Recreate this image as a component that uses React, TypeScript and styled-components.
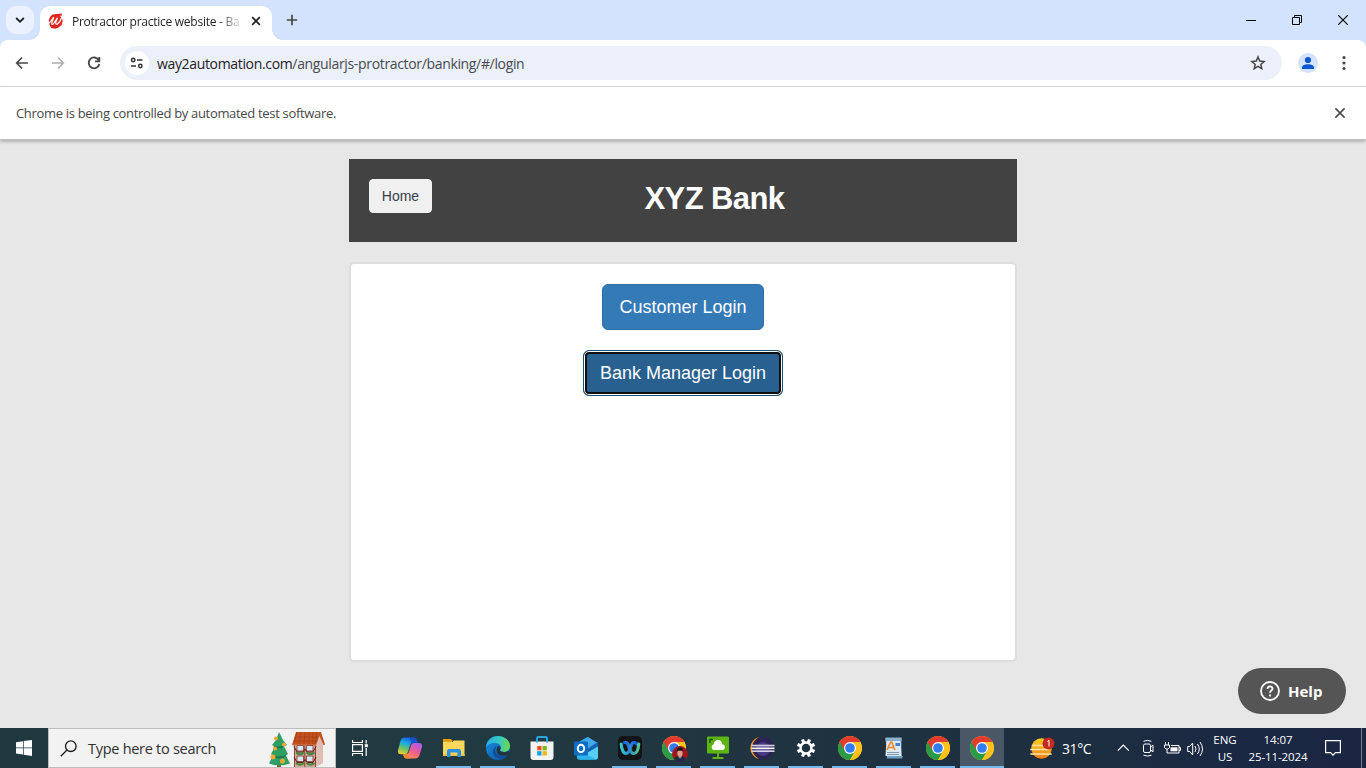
import React from 'react';
import styled, { createGlobalStyle } from 'styled-components';

const Global = createGlobalStyle`
  * { box-sizing: border-box; }
  html, body { margin: 0; padding: 0; overflow: hidden; }
  svg { display: block; flex: none; }
  button { margin: 0; cursor: pointer; }
`;

const ui = `"Segoe UI", "Open Sans", "Noto Sans", sans-serif`;
const arial = `Arial, "Liberation Sans", sans-serif`;

const Screen = styled.div`
  width: 1366px;
  height: 768px;
  display: flex;
  flex-direction: column;
  background: #e7e7e7;
  font-family: ${ui};
`;

const Label = styled.span<{ $size: number; $color?: string; $gap?: number }>`
  font-size: ${p => p.$size}px;
  color: ${p => p.$color ?? 'inherit'};
  letter-spacing: ${p => p.$gap ?? 0}px;
  white-space: nowrap;
`;

/* ---------- browser chrome ---------- */

const TabStrip = styled.div`
  height: 40px;
  flex: none;
  display: flex;
  background: #d3e3fd;
  padding-left: 6px;
`;

const TabSearch = styled.div`
  width: 28px;
  height: 28px;
  margin-top: 6px;
  border-radius: 10px;
  background: #ebf2fe;
  display: flex;
  align-items: center;
  justify-content: center;
`;

const Tab = styled.div`
  position: relative;
  width: 232px;
  height: 34px;
  margin: 6px 0 0 6px;
  padding: 0 0 4px 8px;
  border-radius: 10px 10px 0 0;
  background: #fff;
  display: flex;
  align-items: center;
  &::before, &::after {
    content: '';
    position: absolute;
    bottom: 0;
    width: 10px;
    height: 10px;
  }
  &::before {
    left: -10px;
    background: radial-gradient(circle at 0 0, transparent 9.5px, #fff 10px);
  }
  &::after {
    right: -10px;
    background: radial-gradient(circle at 100% 0, transparent 9.5px, #fff 10px);
  }
`;

const TabTitle = styled.div`
  width: 167px;
  margin: 0 12px 0 8px;
  white-space: nowrap;
  mask-image: linear-gradient(90deg, #000 146px, transparent 172px);
  line-height: 18px;
`;

const NewTab = styled.div`
  padding: 14px 0 0 14px;
`;

const WindowButtons = styled.div`
  margin-left: auto;
  display: flex;
`;

const WindowButton = styled.div`
  width: 46px;
  height: 40px;
  display: flex;
  align-items: center;
  justify-content: center;
`;

const ToolbarBack = styled.div`
  background: #d3e3fd;
  flex: none;
`;

const Toolbar = styled.div`
  height: 47px;
  padding: 0 12px 0 12px;
  background: #fff;
  border-bottom: 1px solid #dcdcdc;
  border-radius: 8px 8px 0 0;
  display: flex;
  align-items: center;
`;

const NavIcon = styled.div<{ $w: number }>`
  width: ${p => p.$w}px;
  height: 34px;
  display: flex;
  align-items: center;
`;

const AddressBar = styled.div`
  width: 1162px;
  height: 34px;
  border-radius: 17px;
  background: #ecf0fa;
  padding: 0 16px 0 5px;
  display: flex;
  align-items: center;
`;

const SiteInfo = styled.div`
  width: 24px;
  height: 24px;
  margin-right: 8px;
  border-radius: 50%;
  background: #fff;
  display: flex;
  align-items: center;
  justify-content: center;
`;

const Push = styled.div`
  margin-left: auto;
`;

const Avatar = styled.div`
  margin-left: 16px;
`;

const InfoBar = styled.div`
  position: relative;
  height: 52px;
  flex: none;
  padding: 0 20px 0 16px;
  background: #fff;
  box-shadow: 0 1px 0 #bfc2c2, 0 2px 4px rgba(0, 0, 0, 0.32);
  display: flex;
  align-items: center;
  justify-content: space-between;
`;

/* ---------- page ---------- */

const Page = styled.main`
  position: relative;
  flex: 1;
  padding-top: 20px;
  display: flex;
  flex-direction: column;
  align-items: center;
  font-family: ${arial};
`;

const BankHeader = styled.header`
  width: 668px;
  height: 83px;
  padding: 20px;
  background: #424242;
  display: flex;
`;

const HomeButton = styled.button`
  width: 63px;
  height: 34px;
  padding: 0;
  border: 1px solid #f0f0f0;
  border-radius: 4px;
  background: #f0f0f0;
  color: #34404a;
  font: 14px ${arial};
`;

const BankTitle = styled.h1`
  flex: 1;
  margin: 0;
  text-align: center;
  color: #fff;
  font: bold 31px/40px ${arial};
  letter-spacing: -0.6px;
`;

const Panel = styled.section`
  width: 668px;
  height: 400px;
  margin-top: 20px;
  padding: 20px;
  border: 2px solid #ddd;
  border-radius: 5px;
  background: #fff;
  display: flex;
  flex-direction: column;
  align-items: center;
  gap: 20px;
`;

const LoginButton = styled.button<{ $focused?: boolean }>`
  height: 46px;
  width: ${p => (p.$focused ? 200 : 162)}px;
  padding: 0;
  border: 1px solid ${p => (p.$focused ? '#204d74' : '#2e6da4')};
  border-radius: 6px;
  background: ${p => (p.$focused ? '#286090' : '#337ab7')};
  color: #fff;
  font: 18px ${arial};
  outline: none;
  box-shadow: ${p => (p.$focused ? 'inset 0 0 0 1px #fff, inset 0 0 0 3px #101010' : 'none')};
`;

const HelpButton = styled.button`
  position: absolute;
  right: 20px;
  bottom: 14px;
  width: 108px;
  height: 46px;
  border: 0;
  border-radius: 23px;
  background: #555;
  color: #fff;
  padding: 0 0 0 22px;
  display: flex;
  align-items: center;
  gap: 8px;
  font: bold 15px ${ui};
`;

/* ---------- taskbar ---------- */

const Taskbar = styled.footer`
  height: 40px;
  flex: none;
  display: flex;
  background: linear-gradient(90deg, #20383f 0%, #213941 38%, #1f3240 62%, #1d2f40 78%, #1b2843 90%, #1a2642 100%);
  color: #fff;
`;

const StartCell = styled.div`
  width: 48px;
  display: flex;
  align-items: center;
  justify-content: center;
`;

const SearchBox = styled.div`
  width: 288px;
  height: 40px;
  padding-left: 11px;
  border: 1px solid #bdbdbd;
  background: #f2f2f2;
  display: flex;
  align-items: center;
  gap: 11px;
`;

const Festive = styled.div`
  margin-left: auto;
  padding-right: 9px;
  align-self: flex-end;
`;

const TaskView = styled.div`
  width: 52px;
  height: 40px;
  padding-right: 5px;
  display: flex;
  align-items: center;
  justify-content: center;
`;

const Cell = styled.div<{ $open?: boolean; $active?: boolean }>`
  width: 44px;
  height: 40px;
  display: flex;
  align-items: center;
  justify-content: center;
  background: ${p => (p.$active ? '#4a5766' : 'transparent')};
  position: relative;
  &::after {
    content: '';
    display: ${p => (p.$open ? 'block' : 'none')};
    position: absolute;
    bottom: 0;
    left: ${p => (p.$active ? 0 : 4)}px;
    right: ${p => (p.$active ? 0 : 5)}px;
    height: 2px;
    background: #76b9ed;
  }
`;

const Tray = styled.div`
  margin-left: auto;
  display: flex;
  align-items: center;
`;

const Weather = styled.div`
  display: flex;
  align-items: center;
  gap: 7px;
  width: 87px;
`;

const TrayIcons = styled.div`
  display: flex;
  align-items: center;
  width: 90px;
`;

const Stack = styled.div<{ $w: number }>`
  width: ${p => p.$w}px;
  display: flex;
  flex-direction: column;
  align-items: center;
  line-height: 17px;
`;

const Notify = styled.div`
  width: 40px;
  display: flex;
  justify-content: center;
`;

const ShowDesktop = styled.div`
  width: 5px;
  height: 40px;
  margin-left: 8px;
  border-left: 1px solid #737c8d;
`;

/* ---------- icons ---------- */

const ChromeIcon = ({ children }: { children?: React.ReactNode }) => (
  <svg width="28" height="28" viewBox="-2 -2 28 28">
    <circle cx="12" cy="12" r="12" fill="#fbc117" />
    <path d="M12 12 L1.6 6 A12 12 0 0 0 12 24 L17.2 15z" fill="#2b9a48" />
    <path d="M12 12 L6.8 15 L1.6 6 A12 12 0 0 1 22.4 6 H12z" fill="#e33b2e" />
    <path d="M12 6 H22.4 A12 12 0 0 1 12 24 L17.2 15z" fill="#fcc21b" />
    <circle cx="12" cy="12" r="6" fill="#fff" />
    <circle cx="12" cy="12" r="4.8" fill="#2f7df0" />
    {children}
  </svg>
);

const ProfileChrome = () => (
  <ChromeIcon>
    <circle cx="18" cy="18" r="7.9" fill="#a3151d" />
    <path d="M12 23.200C12.500 20.800 15 20 18 20s5.500.8 6 3.200A7.900 7.900 0 0 1 12 23.200z" fill="#1d2c48" />
    <path d="M16.500 19h3v2.200l-1.500 1.300-1.500-1.300z" fill="#c58e78" />
    <ellipse cx="18" cy="17" rx="2.700" ry="3.500" fill="#d6a18a" />
    <path d="M15 16.300C14.500 12.500 15.800 11.300 18 11.300s3.500 1.200 3 5L20.400 14.700H15.600z" fill="#1a1416" />
  </ChromeIcon>
);

const CopilotIcon = () => (
  <svg width="26" height="26" viewBox="0 0 26 26">
    <defs>
      <linearGradient id="cpA" x1="0.6" y1="0" x2="0.2" y2="1">
        <stop offset="0" stopColor="#1b55d8" /><stop offset=".35" stopColor="#16a8e8" />
        <stop offset=".65" stopColor="#62c46b" /><stop offset="1" stopColor="#f6ca2b" />
      </linearGradient>
      <linearGradient id="cpB" x1="0.8" y1="0" x2="0.3" y2="1">
        <stop offset="0" stopColor="#a45df0" /><stop offset=".5" stopColor="#ee5b98" /><stop offset="1" stopColor="#ff8a4c" />
      </linearGradient>
    </defs>
    <path d="M8 2.500h9c2 0 2.500 1 3 3l.8 2.500h-4c-2 0-3 1-3.500 3l-1.600 5.500c-.6 2-1.500 2.800-3.500 2.800H4c-2.500 0-3.500-1.500-3-4L3.500 6C4.200 3.500 5.500 2.500 8 2.500z" fill="url(#cpA)" />
    <path d="M17 2.500c2 0 2.500 1 3 3l.8 2.500H17l-2.300.8-.9-3.300c-.5-2-1.300-3-3-3z" fill="#174fc8" />
    <path d="M18 23.500H9.500c-2 0-2.500-1-3-3l-.4-1.200h2.500c2 0 2.800-1 3.400-2.900l1.700-5.500c.5-2 1.500-2.900 3.500-2.900H22c2.500 0 3.500 1.500 3 4l-2.500 8c-.7 2.500-2 3.500-4.500 3.500z" fill="url(#cpB)" />
    <path d="M6.200 19.300h2.500l2.200-.6.800 2.400c.4 1.300 1 2.400 2.300 2.400H9.500c-2 0-2.500-1-3.300-4.200z" fill="#f48735" />
    <path d="M11.200 16.300l1.800-5.800c.5-1.700 1.200-2.500 2.400-2.500l-1.600 1.900-1.900 6.200c-.6 2-1.300 3.200-3.200 3.200 1.300-.5 2-1.400 2.500-3z" fill="#203641" />
  </svg>
);

const FolderIcon = () => (
  <svg width="24" height="24" viewBox="0 0 24 24">
    <path d="M1 3h8l2 2h-1v3H1z" fill="#e29d0d" />
    <path d="M1 6h9l2-1.500h10.500V20H1z" fill="#ffd65c" />
    <path d="M1 18h21.500v2H1z" fill="#f3c04a" />
    <path d="M5 21v-6.500L6.500 13h11l1.500 1.500V21h-3.500v-4.500h-7V21z" fill="#2b90df" />
  </svg>
);

const EdgeIcon = () => (
  <svg width="26" height="26" viewBox="0 0 26 26">
    <defs>
      <linearGradient id="edA" x1="0" y1=".3" x2="1" y2=".4">
        <stop offset="0" stopColor="#28a8e7" /><stop offset=".55" stopColor="#38c9c3" /><stop offset="1" stopColor="#6bd94f" />
      </linearGradient>
      <linearGradient id="edB" x1="0" y1="0" x2="1" y2="1"><stop offset="0" stopColor="#1690df" /><stop offset="1" stopColor="#0b4fa0" /></linearGradient>
    </defs>
    <circle cx="13" cy="13" r="12" fill="url(#edB)" />
    <path d="M1 13C1 5.500 6.500 1 13 1s12 4.500 12 10c0 4-3 6-6.200 6-3.300 0-4.200-1.300-3.500-2.400 2-3.100-.5-6.600-5.300-6.600C5 8 1.500 10.500 1 13z" fill="url(#edA)" />
    <path d="M12.200 11c-2 1.500-2.700 4-1.500 6.500 1.600 3.300 6 4.600 11.800 2.500-1 2-2.500 3.200-4.500 4.200C11 24 7.500 20 8 15.800c.3-2.300 2-4.200 4.200-4.800z" fill="#124b98" />
    <path d="M15.300 14.600c-.7 1.100.2 2.400 3.500 2.400 1.600 0 3-.5 4.200-1.300l1.500 2.500c-.6 1.500-1.200 1.700-2 1.900-5 1.500-9.500.3-10.600-2.600-.7-2.200-.2-4.800 1-6.200 2.500.1 3.200 1.800 2.400 3.300z" fill="#203641" />
  </svg>
);

const StoreIcon = () => (
  <svg width="24" height="26" viewBox="0 0 24 26">
    <path d="M7 8V3.500C7 2.500 7.600 2 8.500 2h7c.9 0 1.500.5 1.500 1.500V8" fill="none" stroke="#29a7df" strokeWidth="2" />
    <path d="M.5 6.500h23V22c0 2-1 3-3 3h-17c-2 0-3-1-3-3z" fill="#f3f3f3" />
    <path d="M7 5v2.500M17 5v2.500" stroke="#29a7df" strokeWidth="2" />
    <path d="M7.200 11h4.300v4.300H7.200z" fill="#f04e23" /><path d="M12.500 11h4.300v4.300h-4.300z" fill="#78b817" />
    <path d="M7.200 16.200h4.300v4.300H7.200z" fill="#04a2ed" /><path d="M12.500 16.200h4.300v4.300h-4.300z" fill="#fbb605" />
  </svg>
);

const OutlookIcon = () => (
  <svg width="26" height="24" viewBox="0 0 26 24">
    <path d="M4 7L14 1l11 6v14c0 1.500-.7 2.500-2 2.500H6c-1.300 0-2-1-2-2z" fill="#1377c9" />
    <path d="M6 6l9-5 9.500 6-10 7z" fill="#3fa9e9" />
    <path d="M14 13L25 6v8l-8 5z" fill="#1263b3" />
    <path d="M5 22L25 10.500V21c0 1.500-.7 2.500-2 2.500H7z" fill="#56cdf3" />
    <path d="M4 14l19 9.500H6c-1.300 0-2-1-2-2z" fill="#2ab4ed" />
    <rect x="1" y="5.500" width="14" height="14" rx="1" fill="#0f6cc4" />
    <ellipse cx="8" cy="12.500" rx="3.200" ry="3.700" fill="none" stroke="#fff" strokeWidth="1.900" />
  </svg>
);

const WebexIcon = () => (
  <svg width="24" height="24" viewBox="0 0 24 24">
    <defs>
      <linearGradient id="wxA" x1="0" x2="1"><stop offset="0" stopColor="#3bc6c4" /><stop offset="1" stopColor="#1a58ee" /></linearGradient>
      <linearGradient id="wxB" x1="0" x2="1"><stop offset="0" stopColor="#1b62ea" /><stop offset="1" stopColor="#58c98c" /></linearGradient>
    </defs>
    <rect width="24" height="24" rx="5" fill="#121416" />
    <path d="M3.200 8c.3 5.500 2.300 9.500 4.800 9.500 3 0 4.200-4.500 5.200-8 .6-2 1.500-3 3-3 1.200 0 2 .6 2.200 1.500" fill="none" stroke="url(#wxA)" strokeWidth="3.200" strokeLinecap="round" />
    <path d="M6.500 6.500c2.500-.5 3.500 1 4.300 4 1 4 2.200 7 5 7 2.700 0 4.500-4.300 4.900-9.500" fill="none" stroke="url(#wxB)" strokeWidth="3.200" strokeLinecap="round" />
  </svg>
);

const MonitorIcon = () => (
  <svg width="24" height="24" viewBox="0 0 24 24">
    <path d="M1.500 1h21v16h-21z" fill="#5eb512" stroke="#5eb512" strokeWidth="1" strokeLinejoin="round" />
    <path d="M11 17h2v4h4.500v2h-11v-2H11z" fill="#5eb512" />
    <path d="M4 7V3.500h3" fill="none" stroke="#1c500b" strokeWidth="1.400" />
    <path d="M7.500 14a3 3 0 0 1 0-5.500c.5-3 2.500-4.500 4.500-4.500s4 1.500 4.300 4.200A3 3 0 0 1 17 14z" fill="#fff" />
  </svg>
);

const EclipseIcon = () => (
  <svg width="26" height="24" viewBox="0 0 26 24">
    <path d="M10 1A11.300 11.300 0 0 0 10 23 13.500 13.500 0 0 1 10 1z" fill="#f7941e" />
    <circle cx="14" cy="12" r="11" fill="#2c2255" />
    <circle cx="14" cy="13" r="7" fill="#473a83" />
    <path d="M2.500 8.700h23v1.700h-23z" fill="#d5cfe3" /><path d="M2.500 11.500h23v1.700h-23z" fill="#fff" /><path d="M2.500 14.300h23V16h-23z" fill="#d5cfe3" />
  </svg>
);

const GearIcon = () => (
  <svg width="20" height="20" viewBox="0 0 20 20">
    <g stroke="#fff" strokeWidth="3.200">
      {[22.5, 67.5, 112.5, 157.5].map(a => (
        <path key={a} d="M10 .8v3.500M10 15.700v3.500" transform={`rotate(${a} 10 10)`} />
      ))}
    </g>
    <circle cx="10" cy="10" r="5.500" fill="none" stroke="#fff" strokeWidth="2.500" />
  </svg>
);

const WordPadIcon = () => (
  <svg width="20" height="24" viewBox="0 0 20 24">
    <path d="M1.500 2h16v18h1.500l-1 2.500H3z" fill="#6d9fc4" />
    <path d="M2.500 5h14l1 15H1.500z" fill="#dce9f5" />
    <path d="M1.500 1.500h16V5h-16z" fill="#8ab2cf" />
    <path d="M3 14L6.700 6h1l3.200 8M4.300 11.500h5.200" fill="none" stroke="#f08a2d" strokeWidth="1.700" />
    <path d="M11.500 7h4.500v3h-4.500z" fill="#4282ce" />
    <path d="M3 16.500h12M3 18.500h12" stroke="#8398ad" />
  </svg>
);

const FestiveArt = () => (
  <svg width="58" height="36" viewBox="0 0 58 36">
    <path d="M26 13h22v23H26z" fill="#d9a596" />
    <path d="M48 13l4-9 3 10v18l-7 4z" fill="#e0bcb2" />
    <path d="M26.500 13v23M36.800 13v23M47.500 13v23" stroke="#8c4436" strokeWidth="1" />
    <path d="M24 14L28 1h25l4 12.500-1.500.8L51.500 5 48 14z" fill="#c4521f" />
    <path d="M29 1l-3 12M33 1l-2 12M37 1l-1 12M41 1v12M45 1l-.5 12M49 1l-2 12M26.500 6h24M25.500 10h24" stroke="#9d3d17" strokeWidth=".6" />
    <path d="M24 14h24" stroke="#e08350" strokeWidth=".8" />
    {[14.5, 25].map(y => (
      <g key={y}>
        <path d={`M29 ${y}h6.500v5.500h-6.500zM38.500 ${y}h6.500v5.500h-6.500z`} fill="#d8e6f4" stroke="#7c3a2c" strokeWidth=".8" />
        <path d={`M26 ${y + 1}l3 5.500h6l2-3 2 3h6l3-5.500`} fill="none" stroke="#612018" strokeWidth="1" />
        <path d={`M28 ${y + 7}q4 3.500 8 0M38.500 ${y + 7}q4 3.500 8 0`} fill="none" stroke="#398c3c" strokeWidth="1.800" />
      </g>
    ))}
    <path d="M9 31h4v5H9z" fill="#8a5b34" />
    <path d="M11 1l4 8 4 5-3 1.500 4 7.500-2 1.500 4 8q-11 4-21 0l4-8-2-1.500 4-7.500-3-1.500 4-5z" fill="#2e9f63" />
    <path d="M5 14.500q6 2 11 0l-2 2.500q-4 1-8-1zM4 24q7 3 14 0l-3 3q-6 1-10-1z" fill="#1a7149" />
    <g fill="#eda832"><circle cx="8" cy="7.500" r="2" /><circle cx="16" cy="13.500" r="2" /><circle cx="7" cy="17.500" r="2" /><circle cx="14.500" cy="30" r="2.500" /><circle cx="5" cy="26" r="2.500" /></g>
  </svg>
);

const WeatherIcon = () => (
  <svg width="25" height="23" viewBox="0 0 25 23">
    <defs><linearGradient id="sun" x1="0" y1="0" x2="0" y2="1"><stop offset="0" stopColor="#ffd21f" /><stop offset="1" stopColor="#f57c18" /></linearGradient></defs>
    <circle cx="11.500" cy="11.500" r="10.300" fill="url(#sun)" />
    <path d="M3 8.500h13M1 12.500h9M12 12.500h6M1 17h20" stroke="#ffe9b0" strokeWidth="1.700" strokeLinecap="round" />
    <circle cx="18.500" cy="6.500" r="6" fill="#c52a20" />
    <path d="M17.500 4.500l1.500-1.200v6.200" fill="none" stroke="#fff" strokeWidth="1" />
  </svg>
);

const TrayGlyphs = () => (
  <svg width="88" height="20" viewBox="0 0 88 20" fill="none" stroke="#fff" strokeWidth="1.200">
    <path d="M.8 12.700L6.300 7.200l5.500 5.500" />
    <g strokeWidth="1">
      <rect x="26.500" y="6" width="7" height="8.500" rx="1.500" />
      <path d="M33.500 9l2.500-1.800v6.600l-2.500-1.800M26.500 3.300q4-1.800 8 0M26.500 17.200q4 1.800 8 0" />
      <path d="M48.500 4v3M51.500 4v3M47.500 7h5v2.500l-1.500 1.500h-2L47.500 9.500zM50 11v4h12V7.500h-8M62 9.500h1.500v3H62" />
    </g>
    <path d="M53.500 9.300h7v4h-7z" fill="#fff" stroke="none" />
    <path strokeWidth="1" d="M70.700 8.500h2l3-3.500v12l-3-3.500h-2zM78 8q2 3 0 6M80.500 6q3.500 5 0 10M83 4q5 7 0 14" />
  </svg>
);

const apps: { icon: React.ReactNode; open?: boolean; active?: boolean }[] = [
  { icon: <CopilotIcon /> },
  { icon: <FolderIcon />, open: true },
  { icon: <EdgeIcon />, open: true },
  { icon: <StoreIcon /> },
  { icon: <OutlookIcon /> },
  { icon: <WebexIcon />, open: true },
  { icon: <ProfileChrome />, open: true },
  { icon: <MonitorIcon />, open: true },
  { icon: <EclipseIcon />, open: true },
  { icon: <GearIcon />, open: true },
  { icon: <ChromeIcon />, open: true },
  { icon: <WordPadIcon />, open: true },
  { icon: <ChromeIcon />, open: true },
  { icon: <ChromeIcon />, open: true, active: true },
];

export default function App() {
  return (
    <Screen>
      <Global />
      <TabStrip>
        <TabSearch>
          <svg width="10" height="8" viewBox="0 0 10 8" fill="none" stroke="#1f1f1f" strokeWidth="1.800"><path d="M1.200 2L5 5.800 8.800 2" /></svg>
        </TabSearch>
        <Tab>
          <svg width="16" height="16" viewBox="0 0 16 16">
            <path d="M4.500 1.500L8.500 1l5.500-.5-.5 3 1.200 4.500-1 4-3.200 2.500-3 1.200-4.500-.7L1.300 11 .8 7 2 4z" fill="#e0251f" />
            <path d="M1 10.500L5.800 4.200 3.800 9.800Q3.500 12 5.200 11L9.500 4.700 7.800 9.300Q7.300 11.700 9.300 11.200 12.500 8.500 13.700 4.500 13.900 2.800 12.300 3.200" fill="none" stroke="#fff" strokeWidth="1.150" />
          </svg>
          <TabTitle><Label $size={12} $color="#1f1f1f" $gap={-0.26}>Protractor practice website - Ba</Label></TabTitle>
          <svg width="10" height="10" viewBox="0 0 10 10" stroke="#1f1f1f" strokeWidth="1.700"><path d="M1.200 1.200l7.600 7.600M8.800 1.200L1.200 8.800" /></svg>
        </Tab>
        <NewTab>
          <svg width="12" height="12" viewBox="0 0 12 12" stroke="#474747" strokeWidth="1.700"><path d="M6 .8v10.400M.8 6h10.400" /></svg>
        </NewTab>
        <WindowButtons>
          <WindowButton><svg width="10" height="10"><path d="M0 5.500h10" stroke="#000" /></svg></WindowButton>
          <WindowButton><svg width="10" height="10" fill="none" stroke="#000"><path d="M.5 2.500h7v7h-7zM2.500 2.500v-2h7v7h-2" /></svg></WindowButton>
          <WindowButton><svg width="10" height="10" stroke="#000" strokeWidth="1.100"><path d="M.2.2l9.600 9.600M9.800.2L.2 9.800" /></svg></WindowButton>
        </WindowButtons>
      </TabStrip>

      <ToolbarBack>
        <Toolbar>
          <NavIcon $w={36}>
            <svg width="20" height="20" viewBox="0 0 20 20" fill="none" stroke="#474747" strokeWidth="1.700"><path d="M16 10H5M10 4.500L4.700 10l5.300 5.500" /></svg>
          </NavIcon>
          <NavIcon $w={36}>
            <svg width="20" height="20" viewBox="0 0 20 20" fill="none" stroke="#b0b0b0" strokeWidth="1.700"><path d="M4 10h11M10 4.500l5.300 5.500-5.300 5.500" /></svg>
          </NavIcon>
          <NavIcon $w={36}>
            <svg width="20" height="20" viewBox="0 0 20 20" fill="none" stroke="#474747" strokeWidth="1.800"><path d="M14.700 7A5.400 5.400 0 1 0 15.400 11M15.300 4v4.300H11" /></svg>
          </NavIcon>
          <AddressBar>
            <SiteInfo>
              <svg width="14" height="14" viewBox="0 0 14 14" fill="none" stroke="#303133" strokeWidth="1.500"><circle cx="3.200" cy="4" r="1.700" /><path d="M7 4h5.500M1 10h5" /><circle cx="10.300" cy="10" r="1.700" /></svg>
            </SiteInfo>
            <Label $size={14} $color="#1f2023" $gap={-0.34}>way2automation.com<Label $size={14} $color="#474b50" $gap={-0.34}>/angularjs-protractor/banking/#/login</Label></Label>
            <Push>
              <svg width="16" height="16" viewBox="0 0 16 16" fill="none" stroke="#474747" strokeWidth="1.500"><path d="M8 2l1.700 4.100 4.400.4-3.300 2.900 1 4.300L8 11.400l-3.800 2.300 1-4.300L1.900 6.500l4.400-.4z" /></svg>
            </Push>
          </AddressBar>
          <Avatar>
            <svg width="20" height="20" viewBox="0 0 20 20"><circle cx="10" cy="10" r="10" fill="#d3e3fd" /><circle cx="10" cy="7" r="3.100" fill="#0b57d0" /><path d="M4 16v-1.500c0-2.500 3-3.300 6-3.300s6 .8 6 3.300V16z" fill="#0b57d0" /></svg>
          </Avatar>
          <Push>
            <svg width="20" height="20" viewBox="0 0 20 20" fill="#474747"><circle cx="10" cy="4.500" r="1.600" /><circle cx="10" cy="10" r="1.600" /><circle cx="10" cy="15.500" r="1.600" /></svg>
          </Push>
        </Toolbar>
      </ToolbarBack>

      <InfoBar>
        <Label $size={13} $color="#474747" $gap={-0.32}>Chrome is being controlled by automated test software.</Label>
        <svg width="12" height="12" viewBox="0 0 12 12" stroke="#474747" strokeWidth="1.500"><path d="M1.400 1.400l9.200 9.200M10.600 1.400l-9.200 9.200" /></svg>
      </InfoBar>

      <Page>
        <BankHeader>
          <HomeButton>Home</HomeButton>
          <BankTitle>XYZ Bank</BankTitle>
        </BankHeader>
        <Panel>
          <LoginButton>Customer Login</LoginButton>
          <LoginButton $focused>Bank Manager Login</LoginButton>
        </Panel>
        <HelpButton>
          <svg width="20" height="20" viewBox="0 0 20 20" fill="none" stroke="#fff" strokeWidth="1.800"><circle cx="10" cy="10" r="9" /><path d="M7.500 8c0-3.400 5-3.300 5-.3 0 1.800-2.500 1.800-2.500 4" /><path d="M10 13.500v2" /></svg>
          Help
        </HelpButton>
      </Page>

      <Taskbar>
        <StartCell>
          <svg width="16" height="16" viewBox="0 0 16 16" fill="#fff"><path d="M0 2.200l7-1v6.300H0zM7.700 1.100L16 0v7.500H7.700zM0 8.300h7v6.300l-7-1zM7.700 8.300H16v7.700l-8.300-1.200z" /></svg>
        </StartCell>
        <SearchBox>
          <svg width="17" height="17" viewBox="0 0 17 17" fill="none" stroke="#1a1a1a" strokeWidth="1.300"><circle cx="10.800" cy="6.200" r="5.300" /><path d="M7 10L.8 16.200" /></svg>
          <Label $size={14.5} $color="#303030" $gap={-0.28}>Type here to search</Label>
          <Festive><FestiveArt /></Festive>
        </SearchBox>
        <TaskView>
          <svg width="16" height="16" viewBox="0 0 16 16" fill="none" stroke="#fff" strokeWidth="1.200"><path d="M.6 0v2.500h9.800V0M.6 4.600h9.800v6.800H.6zM.6 16v-2.500h9.800V16M14.200 0v3.500M14.200 8v8" /><path d="M12.800 4.200h3v3h-3z" fill="#fff" stroke="none" /></svg>
        </TaskView>
        {apps.map((a, i) => <Cell key={i} $open={a.open} $active={a.active}>{a.icon}</Cell>)}
        <Tray>
          <Weather><WeatherIcon /><Label $size={14} $gap={-0.4}>31°C</Label></Weather>
          <TrayIcons><TrayGlyphs /></TrayIcons>
          <Stack $w={36}><Label $size={11.5}>ENG</Label><Label $size={11.5}>US</Label></Stack>
          <Stack $w={70}><Label $size={11.5} $gap={-0.1}>14:07</Label><Label $size={11.5} $gap={-0.1}>25-11-2024</Label></Stack>
          <Notify>
            <svg width="16" height="16" viewBox="0 0 16 16" fill="none" stroke="#fff" strokeWidth="1.200"><path d="M.6.6h14.800v12h-5L8 15.200l-2.400-2.600h-5z" /></svg>
          </Notify>
          <ShowDesktop />
        </Tray>
      </Taskbar>
    </Screen>
  );
}
